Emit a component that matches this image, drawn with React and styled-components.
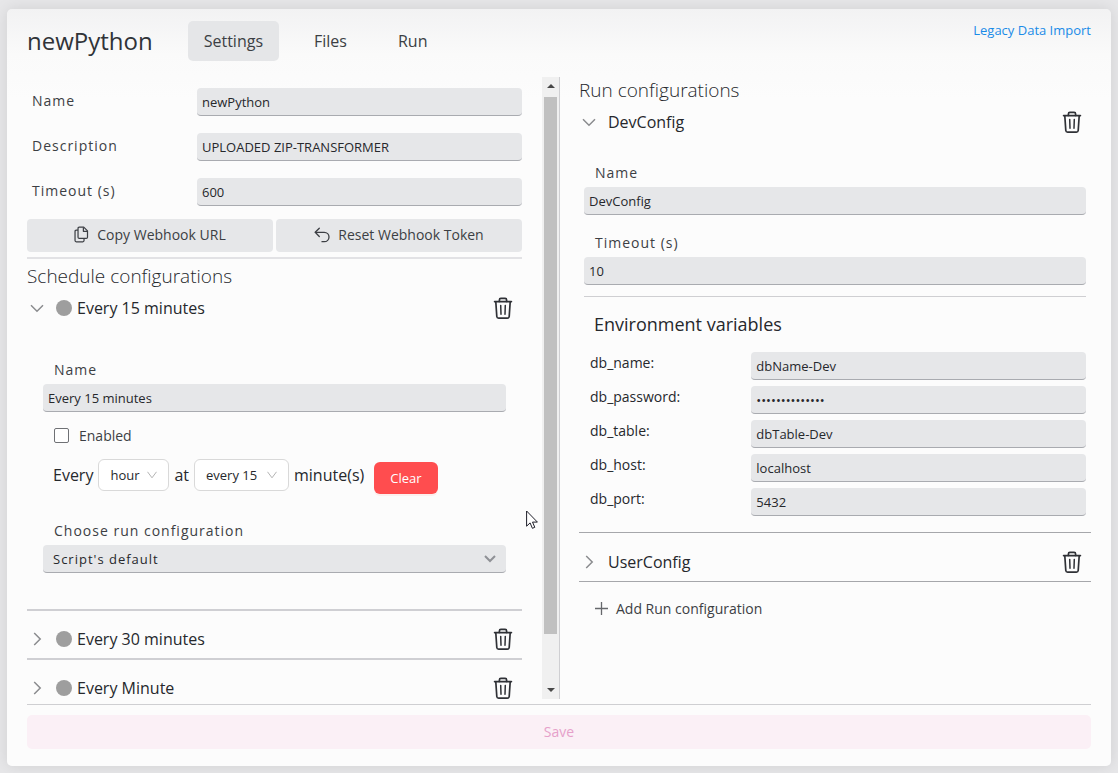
import React, { useState } from 'react';
import styled, { createGlobalStyle, css } from 'styled-components';

const envVars = [
  { name: 'db_name', value: 'dbName-Dev' },
  { name: 'db_password', value: 'dbPassword-Dev', type: 'password' },
  { name: 'db_table', value: 'dbTable-Dev' },
  { name: 'db_host', value: 'localhost' },
  { name: 'db_port', value: '5432' },
];

const TrashIcon = () => (
  <svg width="20" height="24" viewBox="0 0 20 24" fill="none" stroke="#2f3136" strokeWidth="1.7" strokeLinecap="round" strokeLinejoin="round">
    <path d="M1.6 5.6h16.8" />
    <path d="M6.4 5.4V3.9c0-.9.6-1.5 1.5-1.5h4.2c.9 0 1.5.6 1.5 1.5v1.5" />
    <path d="M2.8 5.8l1 14.7c.1 1 .8 1.6 1.8 1.6h8.8c1 0 1.7-.6 1.8-1.6l1-14.7" />
    <path d="M7.7 9.4l.3 8.8M12.3 9.4l-.3 8.8" strokeWidth="1.5" />
  </svg>
);

const Chevron = ({ open }) => (
  <svg width="14" height="14" viewBox="0 0 14 14" fill="none" stroke="#8a8b8e" strokeWidth="1.5">
    <path d={open ? 'M1 4.2l6 6 6-6' : 'M4.2 1l6 6-6 6'} />
  </svg>
);

const CopyIcon = () => (
  <svg width="15" height="17" viewBox="0 0 16 18" fill="none" stroke="#3c3f44" strokeWidth="1.3" strokeLinejoin="round">
    <path d="M5.6 1.2h4.8l4 4v6.6c0 .8-.5 1.3-1.3 1.3H5.6c-.8 0-1.3-.5-1.3-1.3V2.5c0-.8.5-1.3 1.3-1.3z" />
    <path d="M10 1.4v4.2h4.2" />
    <path d="M4.2 4.4H2.4c-.8 0-1.3.5-1.3 1.3v9.8c0 .8.5 1.3 1.3 1.3h7c.8 0 1.3-.5 1.3-1.3v-2.2" />
  </svg>
);

const UndoIcon = () => (
  <svg width="16" height="16" viewBox="0 0 16 16" fill="none" stroke="#3c3f44" strokeWidth="1.3" strokeLinecap="round" strokeLinejoin="round">
    <path d="M5.3 1.2L1.2 5.3l4.1 4.2" />
    <path d="M1.4 5.3h8.8c2.8 0 4.8 2 4.8 4.6s-2 4.8-4.8 4.8H8" />
  </svg>
);

const PlusIcon = () => (
  <svg width="13" height="13" viewBox="0 0 13 13" stroke="#66686c" strokeWidth="1.3">
    <path d="M6.5 0v13M0 6.5h13" />
  </svg>
);

const Cursor = () => (
  <Pointer width="12" height="20" viewBox="0 0 12 20" aria-hidden="true">
    <path d="M.6 1v15.2l3.5-3.3 2.3 5.4 2.4-1-2.3-5.2h4.9z" fill="#fff" stroke="#1d1d28" strokeWidth="1" />
  </Pointer>
);

const ConfigItem = ({ title, status, open, divided, children }) => (
  <Item $divided={divided}>
    <ItemHead>
      <Toggle type="button" aria-expanded={!!open}>
        <Chevron open={open} />
        <ItemTitle>
          {status && <Dot />}
          {title}
        </ItemTitle>
      </Toggle>
      <IconButton type="button" aria-label={`Delete ${title}`}>
        <TrashIcon />
      </IconButton>
    </ItemHead>
    {children}
  </Item>
);

const App = () => {
  const [tab, setTab] = useState('Settings');

  return (
    <Page>
      <GlobalStyle />
      <Card>
        <Header>
          <Title>newPython</Title>
          <Tabs>
            {['Settings', 'Files', 'Run'].map((name) => (
              <Tab key={name} type="button" $active={tab === name} onClick={() => setTab(name)}>
                {name}
              </Tab>
            ))}
          </Tabs>
          <LegacyLink href="#legacy">Legacy Data Import</LegacyLink>
        </Header>

        <Panels>
          <LeftPanel>
            <Scroller>
              <Form>
                <FormRow>
                  <Label htmlFor="script-name">Name</Label>
                  <Input id="script-name" defaultValue="newPython" />
                </FormRow>
                <FormRow>
                  <Label htmlFor="script-desc">Description</Label>
                  <Input id="script-desc" defaultValue="UPLOADED ZIP-TRANSFORMER" />
                </FormRow>
                <FormRow>
                  <Label htmlFor="script-timeout">Timeout (s)</Label>
                  <Input id="script-timeout" defaultValue="600" />
                </FormRow>
              </Form>
              <ButtonRow>
                <GreyButton type="button"><CopyIcon />Copy Webhook URL</GreyButton>
                <GreyButton type="button"><UndoIcon />Reset Webhook Token</GreyButton>
              </ButtonRow>
              <ThickRule />
              <SectionTitle>Schedule configurations</SectionTitle>
              <ConfigItem title="Every 15 minutes" status open>
                <ScheduleBody>
                  <FieldLabel htmlFor="schedule-name">Name</FieldLabel>
                  <Input id="schedule-name" defaultValue="Every 15 minutes" />
                  <CheckRow>
                    <Checkbox id="enabled" type="checkbox" />
                    <label htmlFor="enabled">Enabled</label>
                  </CheckRow>
                  <CronRow>
                    <CronText>Every</CronText>
                    <CronSelect>
                      <select aria-label="Period" defaultValue="hour">
                        <option>hour</option>
                      </select>
                      <svg width="10" height="8" viewBox="0 0 10 8"><path d="M.5.8L5 6.8 9.5.8" /></svg>
                    </CronSelect>
                    <CronText>at</CronText>
                    <CronSelect $wide>
                      <select aria-label="Minutes" defaultValue="every 15">
                        <option>every 15</option>
                      </select>
                      <svg width="10" height="8" viewBox="0 0 10 8"><path d="M.5.8L5 6.8 9.5.8" /></svg>
                    </CronSelect>
                    <CronText>minute(s)</CronText>
                    <ClearButton type="button">Clear</ClearButton>
                  </CronRow>
                  <FieldLabel htmlFor="run-config">Choose run configuration</FieldLabel>
                  <SelectBox>
                    <select id="run-config" defaultValue="default">
                      <option value="default">Script's default</option>
                    </select>
                    <svg width="12" height="8" viewBox="0 0 12 8"><path d="M1 1l5 5 5-5" /></svg>
                  </SelectBox>
                </ScheduleBody>
              </ConfigItem>
              <ConfigItem title="Every 30 minutes" status divided="thick" />
              <ConfigItem title="Every Minute" status divided="thick" />
            </Scroller>
            <Scrollbar aria-hidden="true">
              <Arrow $up />
              <Track><Thumb /></Track>
              <Arrow />
            </Scrollbar>
          </LeftPanel>

          <RightPanel>
            <SectionTitle>Run configurations</SectionTitle>
            <ConfigItem title="DevConfig" open>
              <RunBody>
                <Field>
                  <FieldLabel htmlFor="run-name">Name</FieldLabel>
                  <Input id="run-name" defaultValue="DevConfig" />
                </Field>
                <Field>
                  <FieldLabel htmlFor="run-timeout">Timeout (s)</FieldLabel>
                  <Input id="run-timeout" defaultValue="10" />
                </Field>
                <EnvSection>
                  <EnvTitle>Environment variables</EnvTitle>
                  {envVars.map(({ name, value, type }) => (
                    <EnvRow key={name}>
                      <EnvLabel htmlFor={name}>{name}:</EnvLabel>
                      <Input id={name} type={type || 'text'} defaultValue={value} />
                    </EnvRow>
                  ))}
                </EnvSection>
              </RunBody>
            </ConfigItem>
            <ConfigItem title="UserConfig" divided="thin" />
            <AddButton type="button"><PlusIcon />Add Run configuration</AddButton>
          </RightPanel>
        </Panels>

        <Footer>
          <SaveButton type="button" disabled>Save</SaveButton>
        </Footer>
        <Cursor />
      </Card>
    </Page>
  );
};

const GlobalStyle = createGlobalStyle`
  * {
    box-sizing: border-box;
  }

  body {
    margin: 0;
    background: #e7e7e9;
    color: #26282c;
    font-family: 'Open Sans', 'Noto Sans', sans-serif;
    font-size: 14px;
  }

  button, input, select {
    font-family: inherit;
    color: inherit;
  }

  button {
    border: 0;
    padding: 0;
    background: none;
    cursor: pointer;
  }
`;

const Page = styled.div`
  display: flex;
  height: 100vh;
  padding: 9px 7px 7px;
`;

const Card = styled.main`
  position: relative;
  display: flex;
  flex-direction: column;
  flex: 1;
  min-width: 0;
  padding: 12px 20px 17px;
  border-radius: 5px;
  background: linear-gradient(#f2f2f3, #fafafa 45px, #fcfcfc 90px);
  box-shadow: 0 0 16px rgba(0, 0, 0, 0.1);
`;

const Header = styled.header`
  display: flex;
  height: 56px;
  align-items: flex-start;
`;

const Title = styled.h1`
  margin: 0 35px 0 0;
  font-size: 24px;
  line-height: 40px;
  font-weight: 400;
  color: #303338;
`;

const Tabs = styled.nav`
  display: flex;
  gap: 19px;
`;

const Tab = styled.button`
  height: 40px;
  padding: 0 16px;
  border-radius: 5px;
  font-size: 16px;
  color: #3c3f44;
  background: ${({ $active }) => ($active ? '#e5e6e8' : 'transparent')};
`;

const LegacyLink = styled.a`
  margin-left: auto;
  font-size: 13px;
  line-height: 18px;
  color: #1a8be8;
  text-decoration: none;
`;

const Panels = styled.div`
  display: grid;
  grid-template-columns: 1fr 1fr;
  flex: 1;
  min-height: 0;
`;

const LeftPanel = styled.section`
  display: flex;
  min-width: 0;
  min-height: 0;
`;

const Scroller = styled.div`
  flex: 1;
  min-width: 0;
  padding-right: 20px;
  overflow-y: auto;
  scrollbar-width: none;
`;

const Scrollbar = styled.div`
  display: flex;
  flex-direction: column;
  width: 17px;
  background: #f0f0f0;
`;

const Track = styled.div`
  flex: 1;
  padding: 0 2px;
`;

const Thumb = styled.div`
  height: 92%;
  background: #c0c0c0;
`;

const Arrow = styled.div`
  display: flex;
  align-items: center;
  justify-content: center;
  height: ${({ $up }) => ($up ? 20 : 18)}px;
  padding-bottom: ${({ $up }) => ($up ? 2 : 0)}px;

  &::before {
    content: '';
    border: 4px solid transparent;
    ${({ $up }) => ($up
      ? css`border-top: 0; border-bottom-color: #484848;`
      : css`border-bottom: 0; border-top-color: #484848;`)}
  }
`;

const RightPanel = styled.section`
  min-width: 0;
  padding-left: 19px;
  border-left: 1px solid #cfcfd2;
  overflow-y: auto;
  scrollbar-width: none;
`;

const Form = styled.div`
  display: flex;
  flex-direction: column;
  gap: 17px;
  padding: 11px 0 13px;
`;

const FormRow = styled.div`
  display: grid;
  grid-template-columns: 170px 1fr;
`;

const Label = styled.label`
  padding-left: 5px;
  line-height: 26px;
  letter-spacing: 1px;
  color: #3c3f44;
`;

const FieldLabel = styled.label`
  display: block;
  margin-bottom: 4px;
  padding-left: 11px;
  line-height: 20px;
  letter-spacing: 1px;
  color: #3c3f44;
`;

const fieldBox = css`
  display: block;
  width: 100%;
  height: 28px;
  border: 0;
  border-bottom: 1px solid #a9abb0;
  border-radius: 4px;
  background: #e6e7e9;
  font-size: 13px;
  outline: none;
`;

const Input = styled.input`
  ${fieldBox}
  padding: 0 5px;
`;

const SelectBox = styled.div`
  position: relative;

  select {
    ${fieldBox}
    padding: 0 10px;
    letter-spacing: 1px;
    appearance: none;
  }

  svg {
    position: absolute;
    right: 10px;
    top: 10px;
    fill: none;
    stroke: #8f9196;
    stroke-width: 2;
    pointer-events: none;
  }
`;

const ButtonRow = styled.div`
  display: grid;
  grid-template-columns: 1fr 1fr;
  gap: 3px;
`;

const GreyButton = styled.button`
  display: flex;
  align-items: center;
  justify-content: center;
  gap: 8px;
  height: 33px;
  padding-bottom: 2px;
  border-radius: 4px;
  background: #e6e7e9;
  font-size: 14px;
  color: #3c3f44;
`;

const ThickRule = styled.hr`
  height: 2px;
  margin: 5px 0 4px;
  border: 0;
  background: #e2e2e5;
`;

const SectionTitle = styled.h2`
  margin: 0 0 4px;
  font-size: 19px;
  line-height: 26px;
  font-weight: 300;
`;

const Item = styled.div`
  ${({ $divided }) => $divided === 'thick' && css`
    padding: 13px 0 4px;
    border-top: 2px solid #cfcfd3;
  `}
  ${({ $divided }) => $divided === 'thin' && css`
    padding: 14px 0 4px;
    border-top: 1px solid #a6a7ab;
    border-bottom: 1px solid #a6a7ab;
  `}
`;

const ItemHead = styled.div`
  display: flex;
  align-items: center;
  justify-content: space-between;
  height: 30px;
  padding: 0 9px 0 3px;
`;

const Toggle = styled.button`
  display: flex;
  align-items: center;
  gap: 12px;
`;

const Dot = styled.span`
  width: 16px;
  height: 16px;
  border-radius: 50%;
  background: #9e9e9e;
`;

const ItemTitle = styled.span`
  display: flex;
  align-items: center;
  gap: 5px;
  font-size: 16px;
  line-height: 24px;
`;

const IconButton = styled.button`
  display: flex;
`;

const ScheduleBody = styled.div`
  padding: 37px 16px 36px;
`;

const CheckRow = styled.div`
  display: flex;
  align-items: center;
  gap: 10px;
  height: 20px;
  margin: 13px 0 14px;
  padding-left: 11px;
  color: #3c3f44;
`;

const Checkbox = styled.input`
  width: 15px;
  height: 15px;
  margin: 0;
  border: 1px solid #6f7175;
  border-radius: 2px;
  background: #fff;
  appearance: none;

  &:checked {
    background: #1a8be8;
  }
`;

const CronRow = styled.div`
  display: flex;
  height: 35px;
  margin-bottom: 27px;
  padding-left: 10px;
  gap: 5px;
`;

const CronText = styled.span`
  font-size: 16px;
  line-height: 32px;
`;

const CronSelect = styled.div`
  position: relative;
  width: ${({ $wide }) => ($wide ? 95 : 71)}px;

  select {
    width: 100%;
    height: 32px;
    padding: 0 11px;
    border: 1px solid #d9d9d9;
    border-radius: 6px;
    background: #fff;
    font-size: 13px;
    appearance: none;
  }

  svg {
    position: absolute;
    right: 12px;
    top: 12px;
    fill: none;
    stroke: #b4b4b4;
    pointer-events: none;
  }
`;

const ClearButton = styled.button`
  align-self: flex-end;
  height: 32px;
  margin-left: 5px;
  padding: 0 16px;
  border-radius: 6px;
  background: #ff4d4f;
  box-shadow: 0 2px 0 rgba(255, 38, 5, 0.06);
  font-size: 13px;
  color: #fff;
`;

const RunBody = styled.div`
  padding: 26px 5px 16px;
`;

const Field = styled.div`
  & + & {
    margin-top: 18px;
  }
`;

const EnvSection = styled.div`
  display: flex;
  flex-direction: column;
  gap: 6px;
  margin-top: 11px;
  padding-top: 15px;
  border-top: 1px solid #cfcfd2;
`;

const EnvTitle = styled.h3`
  margin: 0 0 10px;
  padding-left: 10px;
  font-size: 18px;
  line-height: 24px;
  font-weight: 400;
`;

const EnvRow = styled.div`
  display: grid;
  grid-template-columns: 1fr 2fr;
`;

const EnvLabel = styled.label`
  padding-left: 6px;
  line-height: 22px;
`;

const AddButton = styled.button`
  display: flex;
  align-items: center;
  gap: 8px;
  height: 30px;
  margin-top: 11px;
  padding-left: 16px;
  font-size: 14px;
  color: #3c3f44;
`;

const Footer = styled.footer`
  margin-top: 5px;
  padding-top: 10px;
  border-top: 1px solid #cfcfd2;
`;

const SaveButton = styled.button`
  display: block;
  width: 100%;
  height: 34px;
  padding-bottom: 2px;
  border-radius: 5px;
  background: #fbf0f6;
  font-size: 14px;
  color: #e6a0ca;
`;

const Pointer = styled.svg`
  position: absolute;
  left: 519px;
  top: 501px;
  pointer-events: none;
`;

export default App;
